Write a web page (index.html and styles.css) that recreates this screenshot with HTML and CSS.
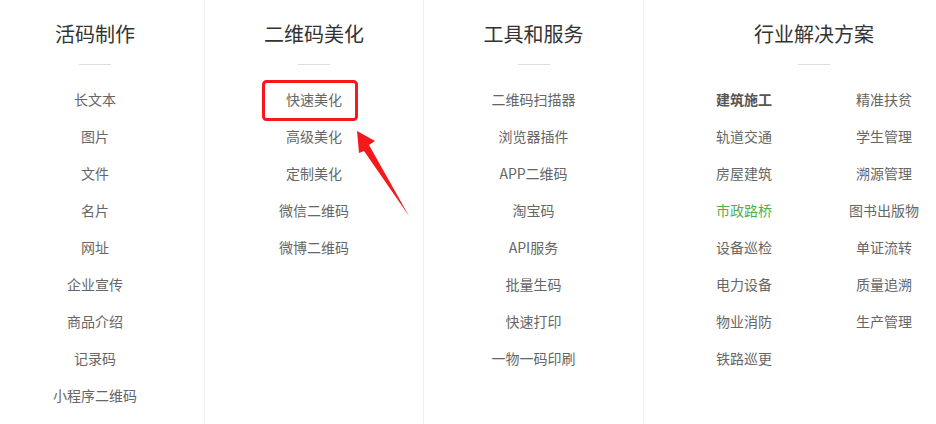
FILE: index.html
```html
<!DOCTYPE html>
<html lang="zh-CN">
<head>
    <meta charset="UTF-8">
    <title>导航</title>
    <link rel="stylesheet" href="styles.css">
</head>
<body>
    <div class="nav">
        <div class="col col-first">
            <h2 class="title">活码制作</h2>
            <div class="line"></div>
            <ul class="links">
                <li>长文本</li>
                <li>图片</li>
                <li>文件</li>
                <li>名片</li>
                <li>网址</li>
                <li>企业宣传</li>
                <li>商品介绍</li>
                <li>记录码</li>
                <li>小程序二维码</li>
            </ul>
        </div>
        <div class="col">
            <h2 class="title">二维码美化</h2>
            <div class="line"></div>
            <ul class="links">
                <li>快速美化</li>
                <li>高级美化</li>
                <li>定制美化</li>
                <li>微信二维码</li>
                <li>微博二维码</li>
            </ul>
        </div>
        <div class="col">
            <h2 class="title">工具和服务</h2>
            <div class="line"></div>
            <ul class="links">
                <li>二维码扫描器</li>
                <li>浏览器插件</li>
                <li>APP二维码</li>
                <li>淘宝码</li>
                <li>API服务</li>
                <li>批量生码</li>
                <li>快速打印</li>
                <li>一物一码印刷</li>
            </ul>
        </div>
        <div class="col col-last">
            <div class="wide">
                <h2 class="title">行业解决方案</h2>
                <div class="line"></div>
                <ul class="links two">
                    <li class="strong">建筑施工</li>
                    <li>精准扶贫</li>
                    <li>轨道交通</li>
                    <li>学生管理</li>
                    <li>房屋建筑</li>
                    <li>溯源管理</li>
                    <li class="green">市政路桥</li>
                    <li>图书出版物</li>
                    <li>设备巡检</li>
                    <li>单证流转</li>
                    <li>电力设备</li>
                    <li>质量追溯</li>
                    <li>物业消防</li>
                    <li>生产管理</li>
                    <li>铁路巡更</li>
                </ul>
            </div>
        </div>
    </div>

    <!-- annotation: highlight box + arrow -->
    <svg class="mark" width="936" height="424" viewBox="0 0 936 424">
        <rect x="263.5" y="81.5" width="93" height="38" rx="3" fill="none" stroke="#f5191c" stroke-width="3"/>
        <polygon points="357,131 375,141 369,145 409,216 364,151 359,153" fill="#f5191c"/>
    </svg>
</body>
</html>
```

FILE: styles.css
```css
body {
    margin: 0;
    overflow: hidden;
    background-color: #fff;
    font-family: "Noto Sans CJK SC", "Noto Sans", Arial, sans-serif;
}
.nav {
    display: flex;
    height: 424px;
}
.col {
    box-sizing: border-box;
    width: 220px;
    border-right: 1px solid #eee;
    text-align: center;
}
.col-first {
    width: 205px;
    padding-right: 14px;
}
.col-first + .col {
    width: 219px;
}
.col-last {
    flex: 1;
    border-right: none;
}
.wide {
    width: 280px;
    margin-left: 30px;
}
.title {
    margin: 0;
    padding-top: 20px;
    font-size: 20px;
    line-height: 28px;
    font-weight: normal;
    color: #333;
}
.line {
    width: 32px;
    height: 1px;
    margin: 16px auto 0;
    background-color: #dcdde0;
}
.links {
    list-style: none;
    margin: 16px 0 0;
    padding: 0;
}
.links li {
    font-size: 14px;
    line-height: 37px;
    color: #666;
}
.links.two {
    display: grid;
    grid-template-columns: 140px 140px;
}
.links li.strong {
    font-weight: bold;
    color: #555;
}
.links li.green {
    color: #4caf50;
}
.mark {
    position: absolute;
    left: 0;
    top: 0;
}
```
